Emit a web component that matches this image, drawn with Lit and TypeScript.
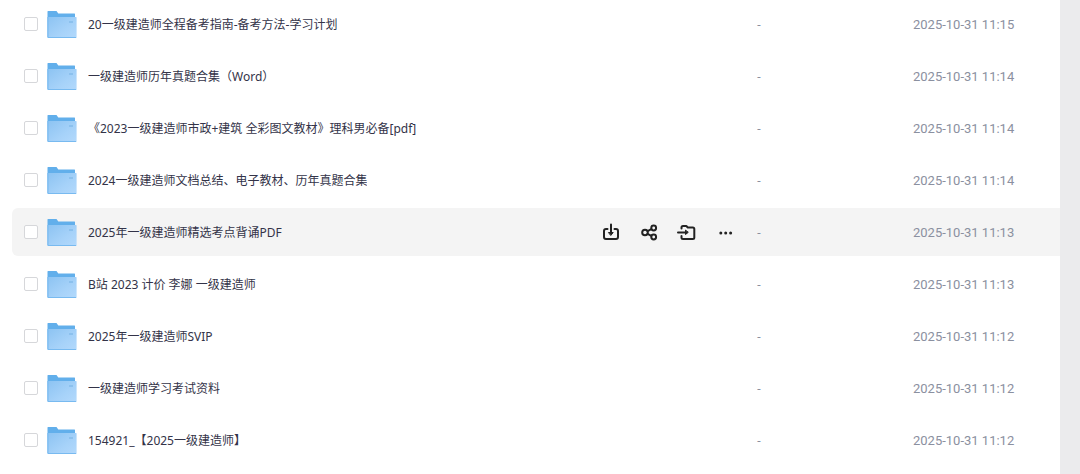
import { LitElement, html, css, svg } from "lit";
import { customElement, property, state } from "lit/decorators.js";
import { classMap } from "lit/directives/class-map.js";

interface FileEntry {
  name: string;
  size: string;
  modified: string;
}

const FILES: FileEntry[] = [
  { name: "20一级建造师全程备考指南-备考方法-学习计划", size: "-", modified: "2025-10-31 11:15" },
  { name: "一级建造师历年真题合集（Word）", size: "-", modified: "2025-10-31 11:14" },
  { name: "《2023一级建造师市政+建筑 全彩图文教材》理科男必备[pdf]", size: "-", modified: "2025-10-31 11:14" },
  { name: "2024一级建造师文档总结、电子教材、历年真题合集", size: "-", modified: "2025-10-31 11:14" },
  { name: "2025年一级建造师精选考点背诵PDF", size: "-", modified: "2025-10-31 11:13" },
  { name: "B站 2023 计价 李娜 一级建造师", size: "-", modified: "2025-10-31 11:13" },
  { name: "2025年一级建造师SVIP", size: "-", modified: "2025-10-31 11:12" },
  { name: "一级建造师学习考试资料", size: "-", modified: "2025-10-31 11:12" },
  { name: "154921_【2025一级建造师】", size: "-", modified: "2025-10-31 11:12" },
];

const ACTIONS = [
  {
    label: "下载",
    icon: svg`<path d="M6.5 6H5a2 2 0 0 0-2 2v6a2 2 0 0 0 2 2h10a2 2 0 0 0 2-2V8a2 2 0 0 0-2-2h-1.500M10 1.500v9"/><path d="M7.800 9.500h4.400L10 12.200z" fill="currentColor" stroke-width="1"/>`,
  },
  {
    label: "分享",
    icon: svg`<circle cx="6" cy="9.500" r="2.800"/><circle cx="14.700" cy="5" r="2.400"/><circle cx="14.700" cy="14" r="2.400"/><path d="M8.600 8.200l3.700-2M8.600 10.800l3.700 2"/>`,
  },
  {
    label: "移动",
    icon: svg`<path d="M4.500 5.500V4.500A1.500 1.500 0 0 1 6 3h3.300l1.500 1.500h5A1.500 1.500 0 0 1 17.300 6v8.500a1.500 1.500 0 0 1-1.500 1.500H6a1.500 1.500 0 0 1-1.500-1.500V13M1 9.500h8.500"/><path d="M8.500 7.500v4l2.500-2z" fill="currentColor" stroke-width="1"/>`,
  },
  {
    label: "更多",
    icon: svg`<g fill="currentColor" stroke="none"><circle cx="5.800" cy="10" r="1.500"/><circle cx="10.700" cy="10" r="1.500"/><circle cx="15.600" cy="10" r="1.500"/></g>`,
  },
];

@customElement("folder-icon")
export class FolderIcon extends LitElement {
  static styles = css`
    :host { display: block; flex: none; }
    svg { display: block; }
  `;

  render() {
    return html`<svg width="30" height="28" viewBox="0 0 30 28" aria-hidden="true">
      <defs>
        <linearGradient id="front" x1="0" y1="0" x2="1" y2="1">
          <stop offset="0" stop-color="#8cc3f2" />
          <stop offset=".6" stop-color="#a6d2f9" />
          <stop offset="1" stop-color="#b3d9fc" />
        </linearGradient>
      </defs>
      <path d="M.5.500a.5.500 0 0 1 .5-.5h8.500l1.800 2.500H27.500a.5.500 0 0 1 .5.500V26H.5z" fill="#62afeb" />
      <path d="M1 6h28a.6.600 0 0 1 .6.600V26.400a.6.600 0 0 1-.6.600H.5V6z" fill="url(#front)" />
      <path d="M1 6v20.500h28" fill="none" stroke="#78baf0" stroke-width="1" />
      <rect x="22" y="10" width="4" height="2" fill="#8cc1ee" />
    </svg>`;
  }
}

@customElement("app-root")
export class AppRoot extends LitElement {
  @property({ type: Array }) files = FILES;
  @state() private active = 4;

  static styles = css`
    :host {
      display: flex;
      min-height: 100vh;
      background: #ebebed;
      color: #333348;
      font: 12px/16px "Noto Sans", "Noto Sans CJK SC", sans-serif;
    }
    .panel {
      flex: 1;
      min-width: 0;
      margin-right: 20px;
      padding-left: 12px;
      background: #fff;
    }
    .list {
      width: 100%;
      margin-top: -4px;
      border-spacing: 0 4px;
      table-layout: fixed;
    }
    td {
      box-sizing: border-box;
      height: 48px;
      padding: 2px 0 0;
    }
    .active td { background: #f4f4f4; }
    .name-cell { border-radius: 6px 0 0 6px; }
    .actions-cell { width: 156px; }
    .size-cell { width: 156px; color: #8b90a0; }
    .date-cell {
      width: 147px;
      color: #8b90a0;
      white-space: nowrap;
    }
    .date { font: 13px/16px Roboto, "Noto Sans", sans-serif; }
    .entry {
      display: flex;
      align-items: center;
      padding-left: 12px;
    }
    .check {
      appearance: none;
      flex: none;
      box-sizing: border-box;
      width: 14px;
      height: 14px;
      margin: 0 9px 2px 0;
      border: 1px solid #d6d7da;
      border-radius: 2px;
      background: #fff;
    }
    .check:checked {
      border-color: #5eaeee;
      background: #5eaeee;
    }
    .name {
      margin-left: 11px;
      overflow: hidden;
      color: inherit;
      text-decoration: none;
      text-overflow: ellipsis;
      white-space: nowrap;
    }
    .actions {
      display: flex;
      gap: 18px;
      visibility: hidden;
    }
    .active .actions { visibility: visible; }
    .action {
      width: 20px;
      height: 20px;
      padding: 0;
      border: 0;
      background: none;
      color: #222;
    }
    .action svg {
      display: block;
      fill: none;
      stroke: currentColor;
      stroke-width: 2;
      stroke-linecap: round;
      stroke-linejoin: round;
    }
  `;

  render() {
    return html`<main class="panel">
      <table class="list" aria-label="文件列表">
        <tbody>
          ${this.files.map(
            (file, i) => html`<tr class=${classMap({ active: i === this.active })} @mouseenter=${() => (this.active = i)}>
              <td class="name-cell">
                <div class="entry">
                  <input class="check" type="checkbox" aria-labelledby="name-${i}" />
                  <folder-icon></folder-icon>
                  <a class="name" id="name-${i}" href="#">${file.name}</a>
                </div>
              </td>
              <td class="actions-cell">
                <div class="actions">
                  ${ACTIONS.map(
                    (a) => html`<button class="action" type="button" aria-label=${a.label}>
                      <svg width="20" height="20" viewBox="0 0 20 20">${a.icon}</svg>
                    </button>`
                  )}
                </div>
              </td>
              <td class="size-cell">${file.size}</td>
              <td class="date-cell"><time class="date">${file.modified}</time></td>
            </tr>`
          )}
        </tbody>
      </table>
    </main>`;
  }
}
